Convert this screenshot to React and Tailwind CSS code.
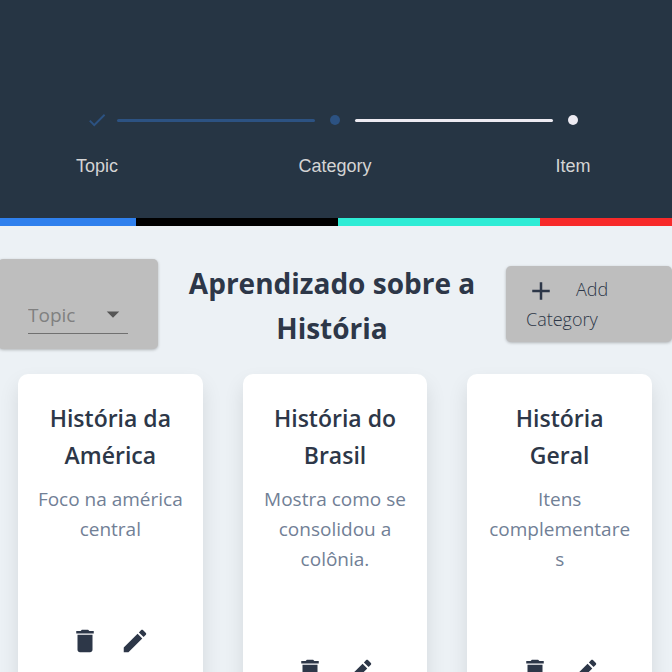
const steps = [
  { label: "Topic", state: "done" },
  { label: "Category", state: "active" },
  { label: "Item", state: "pending" },
];

const categories = [
  { title: "História da América", text: "Foco na américa central" },
  { title: "História do Brasil", text: "Mostra como se consolidou a colônia." },
  { title: "História Geral", text: "Itens complementares" },
];

function Icon({ d, className = "" }) {
  return (
    <svg viewBox="0 0 24 24" className={`size-[30px] fill-current ${className}`} aria-hidden="true">
      <path d={d} />
    </svg>
  );
}

function StepMark({ state }) {
  if (state === "done") {
    return (
      <svg viewBox="0 0 24 24" className="size-[22px] fill-[#2c5282]" aria-hidden="true">
        <path d="M9 16.17L4.83 12l-1.42 1.41L9 19 21 7l-1.41-1.41z" />
      </svg>
    );
  }
  return (
    <span
      className={`size-2.5 rounded-full ${state === "active" ? "bg-[#2c5282]" : "bg-[#edebf2]"}`}
    />
  );
}

function Stepper() {
  return (
    <ol className="flex pl-[77px] pr-[79px]">
      {steps.map((step, i) => (
        <li key={step.label} className={`flex ${i > 0 ? "flex-1" : ""}`}>
          {i > 0 && (
            <span
              className={`mt-[9px] h-[3px] flex-1 rounded-sm ${i === 1 ? "bg-[#2c5282]" : "bg-[#edebf2]"}`}
            />
          )}
          <span className="flex w-10 flex-col items-center gap-[22px]">
            <span className="flex h-5 items-center">
              <StepMark state={step.state} />
            </span>
            <span className="whitespace-nowrap font-['Liberation_Sans',Arial,sans-serif] text-lg text-[#d4d4d4]">
              {step.label}
            </span>
          </span>
        </li>
      ))}
    </ol>
  );
}

function CategoryCard({ title, text }) {
  return (
    <article className="flex min-w-0 flex-col items-center rounded-[10px] bg-white px-[18px] pt-[26px] pb-8 text-center shadow-[0_10px_20px_rgba(0,0,0,0.1)]">
      <h2 className="px-1 text-[23px] leading-[37px] font-semibold text-[#2d3748]">{title}</h2>
      <p className="mt-2.5 w-full text-[19px] leading-[30px] break-words text-[#718096]">{text}</p>
      <div className="mt-[82px] flex gap-5 text-[#2d3748]">
        <button type="button" aria-label="Delete">
          <Icon d="M6 19c0 1.1.9 2 2 2h8c1.1 0 2-.9 2-2V7H6v12zM19 4h-3.5l-1-1h-5l-1 1H5v2h14V4z" />
        </button>
        <button type="button" aria-label="Edit">
          <Icon d="M3 17.25V21h3.75L17.81 9.94l-3.75-3.75L3 17.25zM20.71 7.04c.39-.39.39-1.02 0-1.41l-2.34-2.34c-.39-.39-1.02-.39-1.41 0l-1.83 1.83 3.75 3.75 1.83-1.83z" />
        </button>
      </div>
    </article>
  );
}

export default function App() {
  return (
    <div className="min-h-screen overflow-x-hidden bg-[#ecf1f5] font-['Segoe_UI','Open_Sans','Noto_Sans',sans-serif]">
      <header className="bg-[#263544] pt-[110px] pb-[38px]">
        <Stepper />
      </header>
      <div className="grid h-2 grid-cols-[136fr_202fr_202fr_132fr]">
        <span className="bg-[#2f80ed]" />
        <span className="bg-black" />
        <span className="bg-[#2eecd5]" />
        <span className="bg-[#f72a2a]" />
      </div>

      <main>
        <section className="mt-[31px] flex items-center">
          <div className="-ml-0.5 flex h-[90px] w-40 items-end rounded-[5px] bg-[#bebebe] pb-[15px] pl-[30px] shadow-[0_1px_3px_rgba(0,0,0,0.25)]">
            <div className="relative w-[100px] border-b border-[#707070]">
              <select
                aria-label="Topic"
                defaultValue=""
                className="block h-9 w-full appearance-none bg-transparent text-[19px] text-[#808080] outline-none"
              >
                <option value="">Topic</option>
              </select>
              <Icon
                d="M7 10l5 5 5-5z"
                className="pointer-events-none absolute top-0.5 right-0 text-[#555555]"
              />
            </div>
          </div>
          <h1 className="flex-1 px-5 pt-1 text-center text-[28px] leading-[45px] font-bold text-[#2d3748]">
            Aprendizado sobre a História
          </h1>
          <button
            type="button"
            className="w-[166px] rounded-[5px] bg-[#bebebe] px-5 py-2 text-left text-[18px] leading-[30px] font-light text-[#2d3748] shadow-[0_1px_3px_rgba(0,0,0,0.25)]"
          >
            <Icon
              d="M19 13h-6v6h-2v-6H5v-2h6V5h2v6h6v2z"
              className="mt-0.5 mr-5 -mb-0.5 inline-block align-top"
            />
            Add Category
          </button>
        </section>

        <section className="mt-[23px] grid grid-cols-3 items-start gap-10 pr-5 pb-10 pl-[18px]">
          {categories.map((category) => (
            <CategoryCard key={category.title} {...category} />
          ))}
        </section>
      </main>
    </div>
  );
}
